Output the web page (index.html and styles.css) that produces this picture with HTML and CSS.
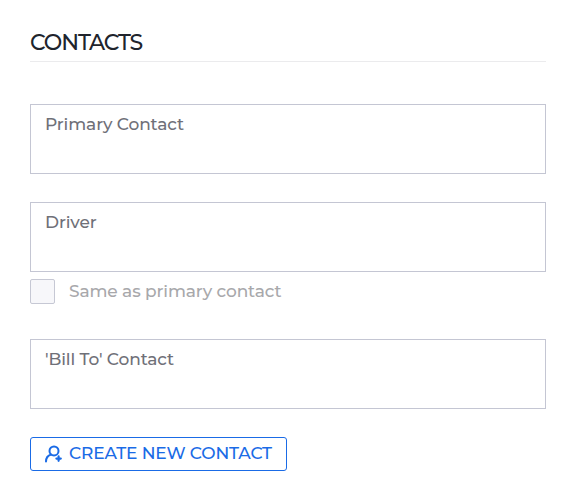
FILE: index.html
```html
<!DOCTYPE html>
<html lang="en">
<head>
  <meta charset="UTF-8">
  <meta name="viewport" content="width=device-width, initial-scale=1.0">
  <title>Contacts</title>
  <link rel="stylesheet" href="styles.css">
</head>
<body>
  <div class="contacts">
    <h2 class="header">CONTACTS</h2>

    <div class="field">Primary Contact</div>

    <div class="field driver">Driver</div>
    <label class="same-contact">
      <input type="checkbox" class="checkbox">
      <span>Same as primary contact</span>
    </label>

    <div class="field">'Bill To' Contact</div>

    <button type="button" class="btn">
      <svg class="icon" width="18" height="18" viewBox="0 0 18 18">
        <circle cx="9" cy="5.900" r="4.500" />
        <path d="M1 16.500c0-3.700 1.800-6 5.200-7" />
        <path class="plus" d="M13.600 11.400v4.400M11.400 13.600h4.400" />
      </svg>
      <span>CREATE NEW CONTACT</span>
    </button>
  </div>
</body>
</html>
```

FILE: styles.css
```css
body {
  margin: 0;
  background-color: #fff;
  font-family: Montserrat, Inter, sans-serif;
  font-weight: 500;
}

.contacts {
  width: 516px;
  padding: 30px 0 0 30px;
}

.header {
  height: 31px;
  margin: 0 0 42px;
  border-bottom: 1px solid #ebebed;
  color: #20242c;
  font-size: 22px;
  font-weight: 500;
  line-height: 25px;
  letter-spacing: -1.1px;
}

.field {
  box-sizing: border-box;
  height: 70px;
  margin-bottom: 28px;
  padding: 8px 14px;
  border: 1px solid #c4c6d3;
  color: #6f7078;
  font-size: 17px;
  line-height: 22px;
  letter-spacing: -0.11px;
}

.field.driver {
  margin-bottom: 7px;
}

.same-contact {
  display: flex;
  align-items: center;
  gap: 14px;
  height: 25px;
  margin-bottom: 35px;
  color: #a8a8ab;
  font-size: 17px;
  letter-spacing: -0.11px;
}

.same-contact span {
  padding-bottom: 2px;
}

.checkbox {
  appearance: none;
  box-sizing: border-box;
  width: 25px;
  height: 25px;
  margin: 0;
  border: 1px solid #c6c8d4;
  border-radius: 2px;
  background-color: #f7f7fa;
}

.btn {
  display: flex;
  align-items: center;
  gap: 6px;
  box-sizing: border-box;
  width: 257px;
  height: 34px;
  padding: 0 14px;
  border: 1px solid #1a6be6;
  border-radius: 3px;
  background-color: #fff;
  color: #1a6be6;
  font-family: inherit;
  font-size: 17px;
  font-weight: 500;
  letter-spacing: -0.14px;
  white-space: nowrap;
  cursor: pointer;
}

.btn span {
  padding-bottom: 2px;
}

.icon {
  flex: none;
  fill: none;
  stroke: #1a6be6;
  stroke-width: 2;
  stroke-linecap: round;
}

.icon .plus {
  stroke-width: 2.2;
}
```
